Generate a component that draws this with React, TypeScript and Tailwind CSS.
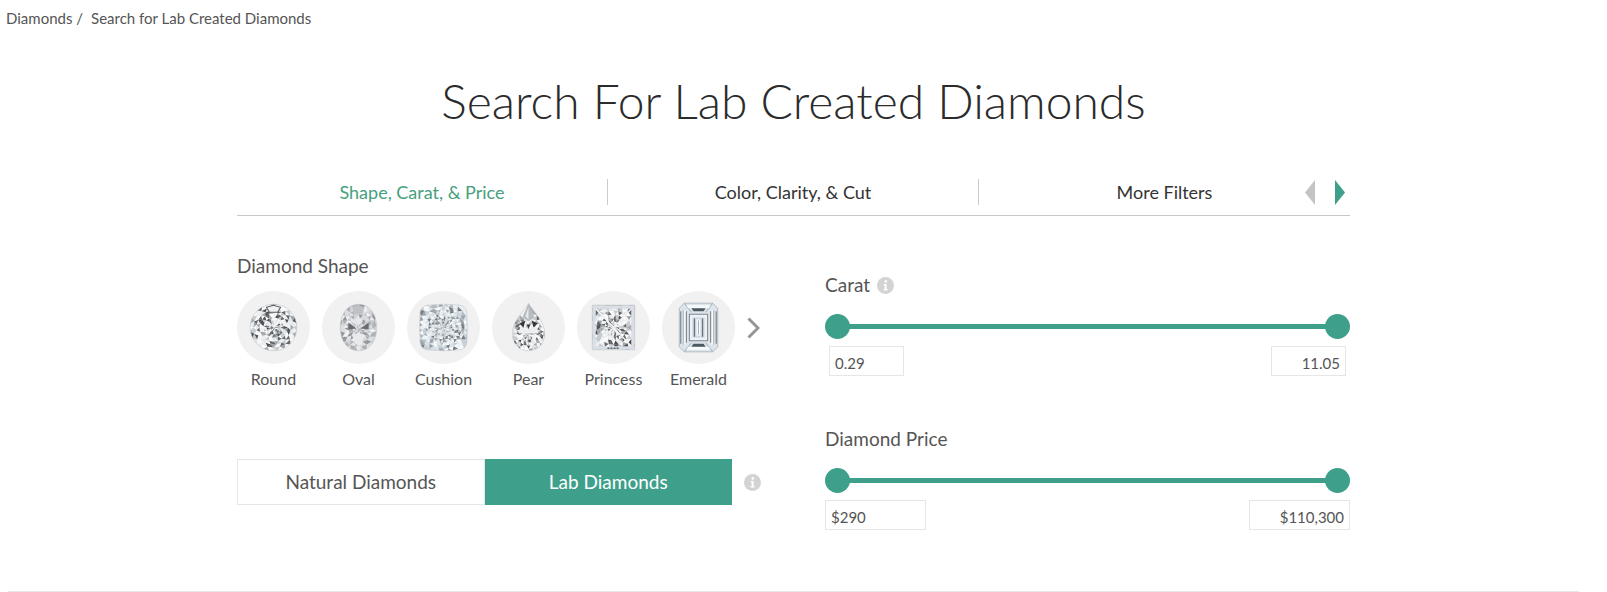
import React, { useState } from 'react';
import clsx from 'clsx';

const TABS = ['Shape, Carat, & Price', 'Color, Clarity, & Cut', 'More Filters'];

interface ShapeOption {
  name: string;
  outline: string;
  cx: number;
  cy: number;
  rings: number[];
  sectors: number;
  seed: number;
  tones: string[];
}

const CRISP = ['#ffffff', '#4b4d50', '#e4e7ea', '#a3a7ab', '#f4f6f8', '#c6cacd', '#65686b', '#eef0f2', '#fbfcfc'];
const SOFT = ['#f1f2f4', '#b4b6ba', '#dcdee1', '#939599', '#e8eaec', '#c9cbcf', '#adafb3', '#d2d4d8'];
const ICY = ['#eef3f6', '#b3bcc3', '#d9e0e5', '#747c83', '#f8fafb', '#c6cfd5', '#e1e8ec', '#98a2aa', '#e9eff2'];

const SHAPES: ShapeOption[] = [
  { name: 'Round', outline: 'M36 13a23 23 0 1 1 0 46a23 23 0 1 1 0-46z', cx: 36, cy: 36, rings: [3, 7, 10, 14, 17, 20, 24], sectors: 20, seed: 7, tones: CRISP },
  { name: 'Oval', outline: 'M36 13c11 0 18 10 18 23s-7 23-18 23s-18-10-18-23s7-23 18-23z', cx: 36, cy: 37, rings: [3, 6, 10, 14, 18, 25], sectors: 20, seed: 19, tones: SOFT },
  { name: 'Cushion', outline: 'M20 14q16-2 32 0q6 1 7 7q1 15 0 30q-1 6-7 7q-16 2-32 0q-6-1-7-7q-1-15 0-30q1-6 7-7z', cx: 36, cy: 36, rings: [3, 6, 9, 12, 15, 18, 21, 25, 32], sectors: 26, seed: 31, tones: ICY },
  { name: 'Pear', outline: 'M36 12c4 8 16 17 16 30c0 10-7 17-16 17s-16-7-16-17c0-13 12-22 16-30z', cx: 36, cy: 42, rings: [3, 6, 9, 12, 15, 20, 31], sectors: 22, seed: 43, tones: CRISP },
  { name: 'Princess', outline: 'M15 14h42v44h-42z', cx: 36, cy: 36, rings: [3, 6, 9, 13, 17, 21, 32], sectors: 22, seed: 11, tones: CRISP },
];

// repeatable pseudo random tone for every facet
const tone = (tones: string[], n: number, seed: number) => {
  const v = Math.sin(n * 12.9898 + seed * 78.233) * 43758.5453;
  return tones[Math.floor((v - Math.floor(v)) * tones.length)];
};

const buildFacets = ({ cx, cy, rings, sectors, seed, tones }: ShapeOption) => {
  const step = (Math.PI * 2) / sectors;
  const at = (r: number, a: number) =>
    `${(cx + Math.cos(a * step) * r).toFixed(1)},${(cy + Math.sin(a * step) * r).toFixed(1)}`;
  const facets: { points: string; fill: string }[] = [];
  rings.forEach((outer, i) => {
    const inner = i === 0 ? 0 : rings[i - 1];
    const shift = i % 2 ? 0.5 : 0;
    for (let s = 0; s < sectors; s++) {
      const a = s + shift;
      const n = i * 100 + s * 2;
      facets.push({ points: `${at(inner, a)} ${at(outer, a - 0.5)} ${at(outer, a + 0.5)}`, fill: tone(tones, n, seed) });
      facets.push({ points: `${at(inner, a)} ${at(inner, a + 1)} ${at(outer, a + 0.5)}`, fill: tone(tones, n + 1, seed) });
    }
  });
  return facets;
};

const Gem: React.FC<{ shape: ShapeOption }> = ({ shape }) => (
  <svg viewBox="0 0 72 72" className="w-full h-full" aria-hidden="true">
    <defs>
      <clipPath id={`gem-${shape.name}`}>
        <path d={shape.outline} />
      </clipPath>
    </defs>
    <g clipPath={`url(#gem-${shape.name})`}>
      <path d={shape.outline} fill="#d5d9dc" />
      {buildFacets(shape).map((f, i) => (
        <polygon key={i} points={f.points} fill={f.fill} />
      ))}
      {shape.name === 'Round' && (
        <path d="M29 16l7-2l7 2l-3 5h-8z" fill="#eef0f2" stroke="#5b5e61" strokeWidth="1" />
      )}
      {shape.name === 'Pear' && (
        <>
          <path d="M36 12l-6 14l6 4l6-4z" fill="#b9bcbf" />
          <path d="M36 16l-3 9l3 3z" fill="#e6e8ea" />
          <path d="M28 35l8 3l8-3l2 7h-20z" fill="#eceeef" />
          <path d="M27 32l6-3l-2 7zM45 32l-6-3l2 7zM34 33h4l-2 4z" fill="#35373a" />
        </>
      )}
      {shape.name === 'Oval' && (
        <>
          <path d="M30 16l6-2l6 2l-2 7h-8z" fill="#bfc1c5" />
          <path d="M26 31l8 6l-8 1zM46 31l-8 6l8 1z" fill="#696b6f" />
          <path d="M32 27h8l-4 8z" fill="#e6e8ea" />
          <path d="M30 44l6-3l6 3l-3 9h-6z" fill="#e8eaec" />
        </>
      )}
      {shape.name === 'Princess' && (
        <>
          <path d="M15 14L57 58M57 14L15 58" stroke="#f1f3f4" strokeWidth="1.5" />
          <path d="M15 14h42v44h-42z" fill="none" stroke="#d9dfe5" strokeWidth="7" />
          <path d="M30 56.5h12" stroke="#5c6064" strokeWidth="1.5" strokeDasharray="2 1" />
        </>
      )}
    </g>
    <path d={shape.outline} fill="none" stroke="#c3c7ca" strokeWidth="0.6" />
  </svg>
);

const EmeraldGem = () => (
  <svg viewBox="0 0 72 72" className="w-full h-full" aria-hidden="true">
    <path d="M22 12h28l5 5v38l-5 5h-28l-5-5v-38z" fill="#dde4ea" stroke="#a6b1b9" strokeWidth="0.8" />
    <path d="M22 12l7 9M50 12l-7 9M22 60l7-9M50 60l-7-9" stroke="#aab5bd" strokeWidth="1" />
    <path d="M24 14h24l-2 3h-20zM24 58h24l-2-3h-20z" fill="#f7fafb" />
    <path d="M18.5 20v32M24 20v31M48 20v31M53.5 20v32" stroke="#7d8890" strokeWidth="1.2" />
    <path d="M21 19v34M51 19v34" stroke="#aab6be" strokeWidth="1" />
    <path d="M22.5 19v34M49.5 19v34" stroke="#fafcfd" strokeWidth="1.4" />
    <path d="M29 17h14l-2 3h-10zM29 55h14l-2-3h-10z" fill="#4d5962" />
    <path d="M27 23h18v26h-18z" fill="#edf2f5" stroke="#7c8891" strokeWidth="1" />
    <path d="M30 26h12v20h-12z" fill="#cfd8de" />
    <path d="M32 27v18M40 27v18" stroke="#69757e" strokeWidth="1.2" />
    <path d="M34 28h4v16h-4z" fill="#f8fafb" />
    <path d="M36 29v14" stroke="#a5b0b8" strokeWidth="1" />
  </svg>
);

const InfoButton: React.FC<{ label: string }> = ({ label }) => (
  <button type="button" aria-label={label} className="shrink-0 w-[17px] h-[17px]">
    <svg viewBox="0 0 17 17" className="w-full h-full">
      <circle cx="8.5" cy="8.5" r="8.5" fill="#d3d3d3" />
      <circle cx="8.8" cy="4.4" r="1.3" fill="#fff" />
      <path d="M6.6 7h3v5.2h1.2v1.2h-4.4v-1.2h1.2v-4h-1z" fill="#fff" />
    </svg>
  </button>
);

interface RangeFilterProps {
  id: string;
  title: string;
  min: number;
  max: number;
  step: number;
  format: (n: number) => string;
  hasInfo?: boolean;
  fieldsClass?: string;
  inputClass: string;
}

const THUMBS =
  'col-start-1 row-start-1 w-full h-[25px] appearance-none bg-transparent pointer-events-none outline-none [&::-webkit-slider-thumb]:appearance-none [&::-webkit-slider-thumb]:pointer-events-auto [&::-webkit-slider-thumb]:w-[25px] [&::-webkit-slider-thumb]:h-[25px] [&::-webkit-slider-thumb]:rounded-full [&::-webkit-slider-thumb]:bg-[#3e9f8b]';

const RangeFilter: React.FC<RangeFilterProps> = ({ id, title, min, max, step, format, hasInfo, fieldsClass, inputClass }) => {
  const [low, setLow] = useState(min);
  const [high, setHigh] = useState(max);

  return (
    <section>
      <div className="flex items-center gap-[7px]">
        <h2 className="text-[19px] leading-6">{title}</h2>
        {hasInfo && <InfoButton label={`About ${title}`} />}
      </div>
      <div className="mt-[17px] grid items-center">
        <div className="col-start-1 row-start-1 mx-3 h-[5px] bg-[#3e9f8b]" />
        <input type="range" aria-label={`Minimum ${title}`} min={min} max={max} step={step} value={low}
          onChange={e => setLow(Math.min(Number(e.target.value), high))} className={THUMBS} />
        <input type="range" aria-label={`Maximum ${title}`} min={min} max={max} step={step} value={high}
          onChange={e => setHigh(Math.max(Number(e.target.value), low))} className={THUMBS} />
      </div>
      <div className={clsx('mt-[7px] flex justify-between', fieldsClass)}>
        <input id={`${id}-low`} type="text" aria-label={`${title} from`} readOnly value={format(low)}
          className={clsx('h-[30px] px-[5px] pt-1 border border-[#e6e6e6] text-[15px] outline-none', inputClass)} />
        <input id={`${id}-high`} type="text" aria-label={`${title} to`} readOnly value={format(high)}
          className={clsx('h-[30px] px-[5px] pt-1 border border-[#e6e6e6] text-[15px] text-right outline-none', inputClass)} />
      </div>
    </section>
  );
};

export default function App() {
  const [tab, setTab] = useState(0);
  const [origin, setOrigin] = useState('Lab Diamonds');

  return (
    <div className="bg-white pl-2 pr-7 font-['Lato','Open_Sans',sans-serif] text-[#555555]">
      <nav aria-label="Breadcrumb" className="-ml-0.5 pt-2 flex gap-2 text-[15px] leading-5">
        <span><a href="#diamonds">Diamonds</a> /</span>
        <a href="#lab">Search for Lab Created Diamonds</a>
      </nav>

      <h1 className="mt-[45px] text-center text-[48px] leading-[56px] font-light text-[#2b2b2b]">
        Search For Lab Created Diamonds
      </h1>

      <main className="mx-auto max-w-[1113px]">
        <div className="mt-[50px] pb-2.5 grid grid-cols-3 border-b border-[#c8c8c8] text-lg leading-[26px] text-[#333]">
          {TABS.map((name, i) => (
            <div
              key={name}
              className={clsx('grid grid-cols-[1fr_auto_1fr] items-center', i < 2 && 'border-r border-[#cccccc]')}
            >
              <button type="button" onClick={() => setTab(i)} className={clsx('col-start-2', tab === i && 'text-[#46a07e]')}>
                {name}
              </button>
              {i === 2 && (
                <div className="flex justify-end gap-5 pr-[5px]">
                  <button type="button" aria-label="Previous filters" onClick={() => setTab(Math.max(tab - 1, 0))}>
                    <svg viewBox="0 0 10 25" className="w-2.5 h-[25px]"><path d="M10 0v25L0 12.5z" fill="#c4c4c4" /></svg>
                  </button>
                  <button type="button" aria-label="Next filters" onClick={() => setTab(Math.min(tab + 1, 2))}>
                    <svg viewBox="0 0 10 25" className="w-2.5 h-[25px]"><path d="M0 0v25L10 12.5z" fill="#3e9f8b" /></svg>
                  </button>
                </div>
              )}
            </div>
          ))}
        </div>

        <div className="grid grid-cols-2 gap-[63px]">
          <div className="pt-[38px]">
            <h2 className="text-[19px] leading-6">Diamond Shape</h2>
            <div className="mt-[13px] flex gap-3">
              {SHAPES.map(shape => (
                <button type="button" key={shape.name} className="w-[73px] flex flex-col items-center gap-[5px]">
                  <span className="block w-[73px] h-[73px] rounded-full bg-[#f1f1f2]"><Gem shape={shape} /></span>
                  <span className="text-base leading-5">{shape.name}</span>
                </button>
              ))}
              <button type="button" className="w-[73px] flex flex-col items-center gap-[5px]">
                <span className="block w-[73px] h-[73px] rounded-full bg-[#f1f1f2]"><EmeraldGem /></span>
                <span className="text-base leading-5">Emerald</span>
              </button>
              <button type="button" aria-label="More shapes" className="h-[73px]">
                <svg viewBox="0 0 13 22" className="w-[13px] h-[22px]">
                  <path d="M1.5 1.5L11 11L1.5 20.5" fill="none" stroke="#969696" strokeWidth="3" />
                </svg>
              </button>
            </div>

            <div className="mt-[70px] flex items-center gap-3">
              <div className="flex w-[495px] h-[46px] text-[19px]">
                {['Natural Diamonds', 'Lab Diamonds'].map(name => (
                  <button
                    type="button"
                    key={name}
                    onClick={() => setOrigin(name)}
                    className={clsx('flex-1 border', origin === name ? 'bg-[#3e9f8b] border-[#3e9f8b] text-white' : 'border-[#e6e6e6]')}
                  >
                    {name}
                  </button>
                ))}
              </div>
              <InfoButton label="About lab diamonds" />
            </div>
          </div>

          <div className="pt-[57px] flex flex-col gap-[51px]">
            <RangeFilter id="carat" title="Carat" min={0.29} max={11.05} step={0.01} hasInfo
              format={n => n.toFixed(2)} fieldsClass="px-1" inputClass="w-[75px]" />
            <RangeFilter id="price" title="Diamond Price" min={290} max={110300} step={10}
              format={n => `$${n.toLocaleString('en-US')}`} inputClass="w-[101px]" />
          </div>
        </div>
      </main>

      <hr className="mt-[61px] border-[#e8e8e8]" />
    </div>
  );
}
